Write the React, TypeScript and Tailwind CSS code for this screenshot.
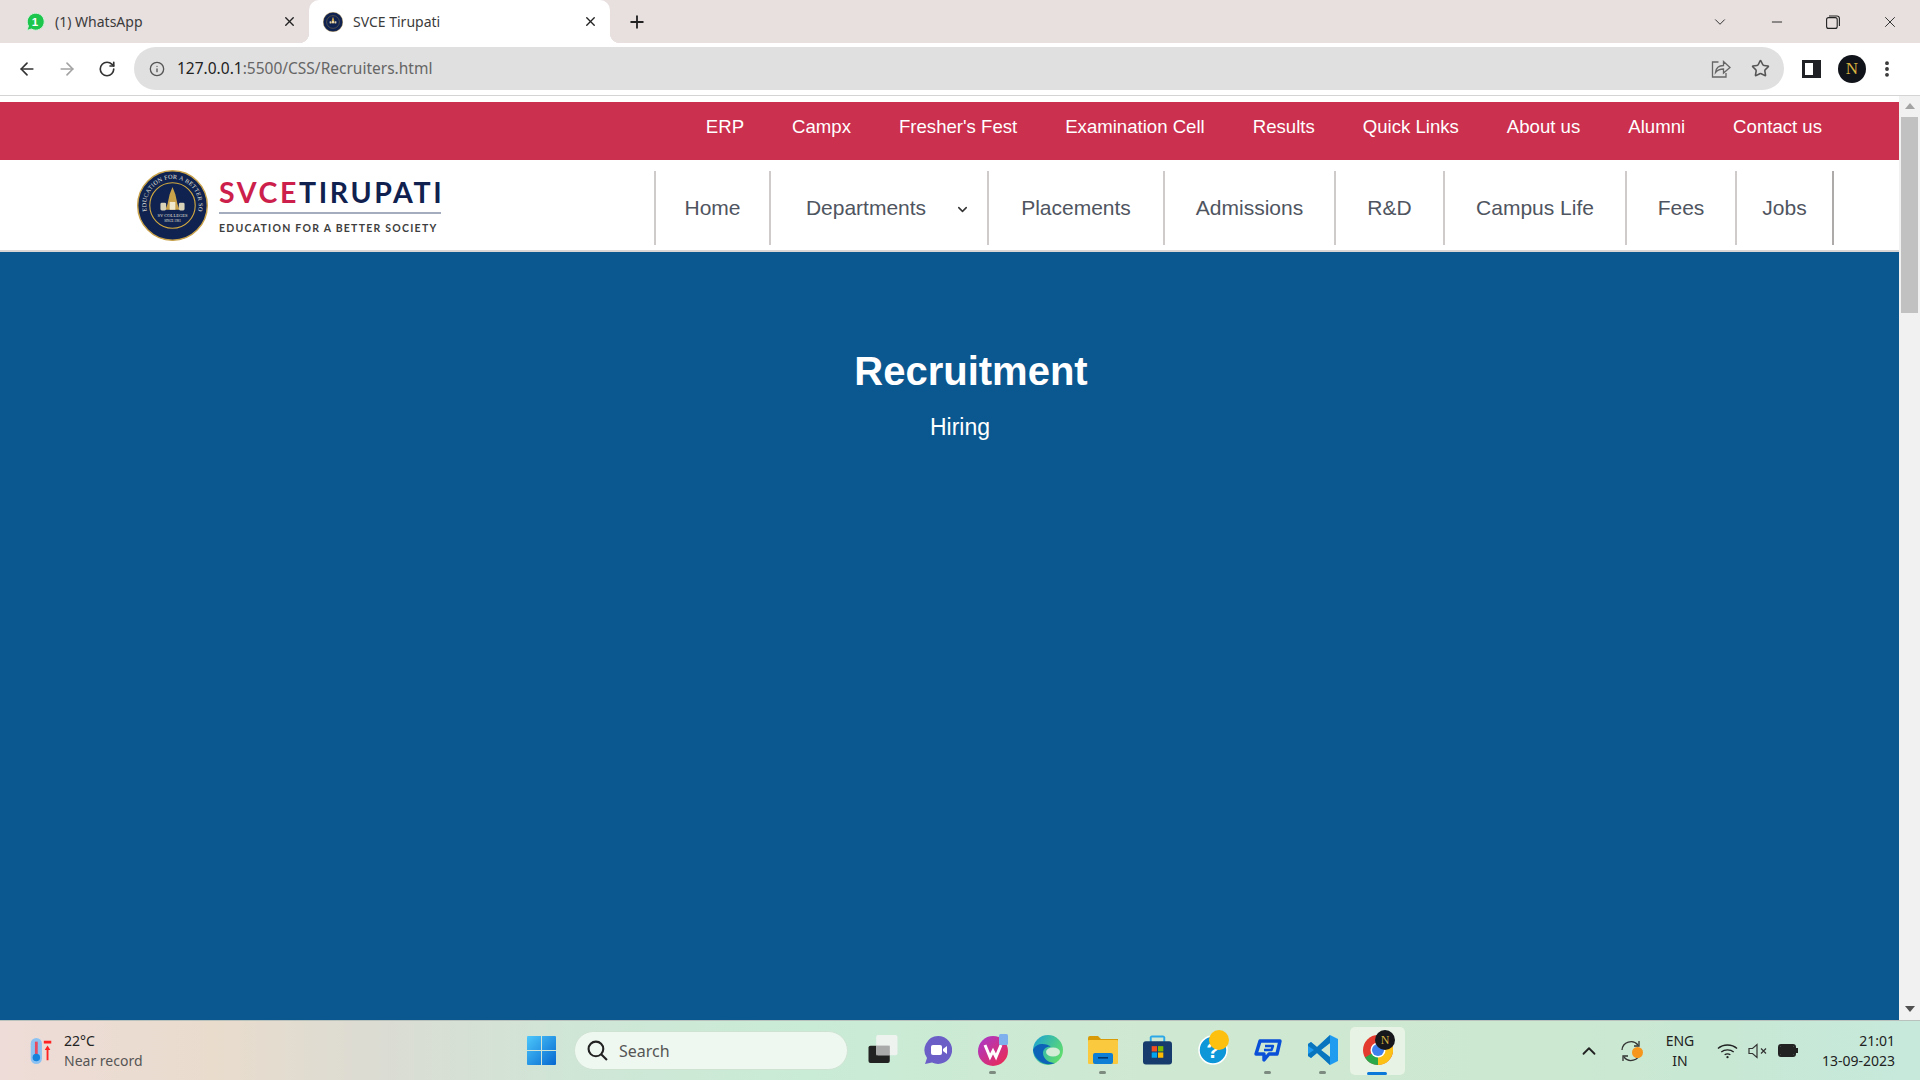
import { ArrowLeft, ArrowRight, ChevronDown, ChevronUp, Info, Minus, MoreVertical, Plus, RotateCw, Star, X } from "lucide-react";

const TOP_LINKS = ["ERP", "Campx", "Fresher's Fest", "Examination Cell", "Results", "Quick Links", "About us", "Alumni", "Contact us"];

const MAIN_LINKS = [
  { label: "Home", cls: "w-[115px]" },
  { label: "Departments", cls: "w-[218px]", caret: true },
  { label: "Placements", cls: "w-[176px]" },
  { label: "Admissions", cls: "w-[171px]" },
  { label: "R&D", cls: "w-[109px]" },
  { label: "Campus Life", cls: "w-[182px]" },
  { label: "Fees", cls: "w-[110px]" },
  { label: "Jobs", cls: "w-[97px]" },
];

function Seal({ small = false }: { small?: boolean }) {
  return (
    <svg viewBox="0 0 100 100" className={small ? "h-5 w-5 shrink-0" : "h-[71px] w-[71px] shrink-0"}>
      <defs>
        <path id={small ? "sealArcS" : "sealArc"} d="M 14 58 A 37 37 0 1 1 86 58" />
      </defs>
      <circle cx="50" cy="50" r="49" fill="#0f2250" stroke="#c9a24a" strokeWidth="2" />
      <circle cx="50" cy="50" r="32" fill="#0f2250" stroke="#d2a93f" strokeWidth="1.6" />
      {!small && (
        <text fontSize="8.6" fill="#e8e6dd" fontFamily="Liberation Serif, serif" letterSpacing="0.4">
          <textPath href="#sealArc">EDUCATION FOR A BETTER SOCIETY</textPath>
        </text>
      )}
      <path d="M50 24 L54 34 L57 48 L60 56 L40 56 L43 48 L46 34 Z" fill="#c9a24a" />
      <rect x="33" y="46" width="8" height="11" rx="2" fill="#d8d2b8" />
      <rect x="59" y="46" width="8" height="11" rx="2" fill="#d8d2b8" />
      <rect x="46" y="45" width="8" height="11" fill="#f0e8cc" />
      {!small && (
        <>
          <text x="50" y="66" textAnchor="middle" fontSize="6.4" fill="#e8e6dd" fontFamily="Liberation Serif, serif">SV COLLEGES</text>
          <text x="50" y="73" textAnchor="middle" fontSize="4.6" fill="#e8e6dd" fontFamily="Liberation Serif, serif">SINCE 1981</text>
        </>
      )}
    </svg>
  );
}

function WhatsAppIcon() {
  return (
    <svg viewBox="0 0 20 20" className="h-5 w-5 shrink-0">
      <path d="M2 18.5 L3.4 14 A8.5 8.5 0 1 1 6.4 17 Z" fill="#1cc54c" stroke="#d7efdc" strokeWidth="1" />
      <text x="10" y="14.2" textAnchor="middle" fontSize="11.5" fontWeight="700" fill="#fff" fontFamily="Liberation Sans, sans-serif">1</text>
    </svg>
  );
}

function Tabs() {
  return (
    <div className="flex h-[43px] shrink-0 items-center bg-[#e8dfdf] font-['Noto_Sans',sans-serif] text-[14px] text-[#3b3b3b]">
      <div className="flex h-full w-[309px] items-center pl-[25px] pr-[12px]">
        <WhatsAppIcon />
        <span className="ml-[10px]">(1) WhatsApp</span>
        <X className="ml-auto h-[15px] w-[15px] text-[#222]" strokeWidth={2.2} />
      </div>
      <div className="relative flex h-full w-[301px] items-center rounded-t-[10px] bg-white pl-[14px] pr-[12px] before:absolute before:bottom-0 before:left-[-10px] before:h-[10px] before:w-[10px] before:bg-[radial-gradient(circle_at_0_0,#e8dfdf_10px,#fff_10.5px)] after:absolute after:bottom-0 after:right-[-10px] after:h-[10px] after:w-[10px] after:bg-[radial-gradient(circle_at_100%_0,#e8dfdf_10px,#fff_10.5px)]">
        <Seal small />
        <span className="ml-[10px]">SVCE Tirupati</span>
        <X className="ml-auto h-[15px] w-[15px] text-[#222]" strokeWidth={2.2} />
      </div>
      <Plus className="ml-[17px] h-[20px] w-[20px] text-[#222]" strokeWidth={2.2} />
      <div className="ml-auto flex items-center pr-[21px] text-[#222]">
        <ChevronDown className="h-[18px] w-[18px]" strokeWidth={1.2} />
        <Minus className="ml-[40px] h-[16px] w-[16px]" strokeWidth={1.4} />
        <svg viewBox="0 0 14 14" className="ml-[41px] h-[14px] w-[14px]" fill="none" stroke="currentColor" strokeWidth="1.1">
          <rect x="0.6" y="2.6" width="10.6" height="10.8" rx="2" />
          <path d="M3 1 H11 A2.4 2.4 0 0 1 13.4 3.4 V11" />
        </svg>
        <X className="ml-[41px] h-[18px] w-[18px]" strokeWidth={1.2} />
      </div>
    </div>
  );
}

function Toolbar() {
  return (
    <div className="flex h-[53px] shrink-0 items-center border-b border-[#d4d4d4] bg-white pb-[1px]">
      <ArrowLeft className="ml-[17px] h-[20px] w-[20px] text-[#333]" strokeWidth={2} />
      <ArrowRight className="ml-[20px] h-[20px] w-[20px] text-[#a3a3a3]" strokeWidth={2} />
      <RotateCw className="ml-[21px] h-[18px] w-[18px] text-[#333]" strokeWidth={2.2} />
      <div className="ml-[18px] flex h-[43px] w-[1650px] items-center rounded-full bg-[#e0e0e0] pl-[15px] pr-[14px] font-['Noto_Sans',sans-serif] text-[15.5px]">
        <Info className="h-[16px] w-[16px] text-[#555]" strokeWidth={2} />
        <span className="ml-[12px] text-[#222]">127.0.0.1</span>
        <span className="text-[#666]">:5500/CSS/Recruiters.html</span>
        <svg viewBox="0 0 20 20" className="ml-auto h-[20px] w-[20px] text-[#666]" fill="none" stroke="currentColor" strokeWidth="1.3">
          <path d="M7.5 3 H1.5 V18 H15 V14" />
          <path d="M4.5 13.5 C5 9 8 6.5 12.5 6.5 V2.5 L19 8.5 L12.5 14 V10 C9 10 6.5 11 4.5 13.5 Z" />
        </svg>
        <Star className="ml-[20px] h-[19px] w-[19px] text-[#555]" strokeWidth={2} />
      </div>
      <div className="ml-[18px] flex h-[18px] w-[19px] justify-start border-[3px] border-[#202124] bg-[#202124]">
        <span className="h-full w-[8px] bg-white" />
      </div>
      <div className="ml-[17px] flex h-[28px] w-[28px] items-center justify-center rounded-full bg-[#10131a]">
        <span className="font-['Liberation_Serif',serif] text-[17px] leading-none text-[#d9b340]">N</span>
      </div>
      <MoreVertical className="ml-[11px] h-[20px] w-[20px] text-[#333]" strokeWidth={2.6} />
    </div>
  );
}

function Logo() {
  return (
    <div className="flex items-center pl-[137px]">
      <Seal />
      <div className="ml-[11px] flex w-[222px] flex-col font-['Lato',sans-serif]">
        <div className="flex text-[28.5px] font-bold leading-[32px] tracking-[2.6px]">
          <span className="text-[#cc1f4b]">SVCE</span>
          <span className="ml-auto text-[#10214f]">TIRUPATI</span>
        </div>
        <div className="mt-[4px] h-[2px] bg-[#a3adbd]" />
        <div className="mt-[8px] whitespace-nowrap text-[10.5px] font-bold leading-[13px] tracking-[1.25px] text-[#3e3e3e]">
          EDUCATION FOR A BETTER SOCIETY
        </div>
      </div>
    </div>
  );
}

function Page() {
  return (
    <div className="flex min-w-0 flex-1 flex-col bg-white pt-[6px] font-['Liberation_Sans',Arial,sans-serif]">
      <div className="flex h-[58px] shrink-0 justify-end gap-[48px] bg-[#cb304e] pr-[77px] pt-[12px] text-[18.6px] leading-[26px] text-white">
        {TOP_LINKS.map((t) => (
          <span key={t}>{t}</span>
        ))}
      </div>
      <div className="flex h-[92px] shrink-0 justify-between border-b-2 border-[#dbd6d6] pr-[65px]">
        <Logo />
        <div className="mt-[11px] flex h-[74px] border-r-2 border-[#aeaaaa]">
          {MAIN_LINKS.map((l) => (
            <div key={l.label} className={`relative flex items-center justify-center border-l-2 border-[#cfcbcb] text-[21px] text-[#4f5560] ${l.cls}`}>
              {l.caret ? (
                <>
                  <span className="mr-[26px]">{l.label}</span>
                  <ChevronDown className="absolute right-[17px] top-[31px] h-[15px] w-[15px] text-[#333]" strokeWidth={2.4} />
                </>
              ) : (
                l.label
              )}
            </div>
          ))}
        </div>
      </div>
      <div className="min-h-0 flex-1 bg-[#0b5790] pt-[94px] text-center text-white">
        <h1 className="pl-[43px] text-[40px] font-bold leading-[50px]">Recruitment</h1>
        <p className="mt-[17px] pl-[21px] text-[23px] leading-[28px]">Hiring</p>
      </div>
    </div>
  );
}

function Scrollbar() {
  return (
    <div className="flex w-[21px] shrink-0 flex-col items-center bg-[#f1f1f1]">
      <div className="mt-[7px] h-0 w-0 border-x-[5px] border-b-[6px] border-x-transparent border-b-[#a3a3a3]" />
      <div className="mt-[8px] h-[196px] w-[17px] bg-[#c1c1c1]" />
      <div className="mb-[8px] mt-auto h-0 w-0 border-x-[5px] border-t-[6px] border-x-transparent border-t-[#505050]" />
    </div>
  );
}

function Dock({ children, dot, active }: { children: React.ReactNode; dot?: boolean; active?: boolean }) {
  return (
    <div className={`relative flex h-[48px] w-[55px] shrink-0 items-center justify-center rounded-[5px] pb-[2px] ${active ? "bg-[#e7f3e4]" : ""}`}>
      {children}
      {dot && <span className="absolute bottom-[1px] left-[24px] h-[3px] w-[7px] rounded-full bg-[#7c8a80]" />}
      {active && <span className="absolute bottom-[0px] left-[17px] h-[3px] w-[20px] rounded-full bg-[#0a78d8]" />}
    </div>
  );
}

function DockIcons() {
  return (
    <>
      <Dock>
        <svg viewBox="0 0 30 30" className="h-[29px] w-[30px]">
          <rect x="0" y="11" width="22" height="18" rx="2" fill="#222" />
          <rect x="8" y="0" width="22" height="21" rx="2" fill="#f4f4f4" opacity="0.85" />
          <rect x="8" y="11" width="14" height="10" fill="#aaa" />
        </svg>
      </Dock>
      <Dock>
        <svg viewBox="0 0 28 28" className="h-[28px] w-[28px]">
          <path d="M14 0 A14 14 0 1 1 8 26.6 L1 28 L3 22 A14 14 0 0 1 14 0 Z" fill="#6b5fc7" />
          <rect x="7" y="9" width="11" height="10" rx="2" fill="#fff" />
          <path d="M19 13 L23 10 V18 L19 15 Z" fill="#fff" />
        </svg>
      </Dock>
      <Dock dot>
        <svg viewBox="0 0 30 32" className="h-[32px] w-[30px]">
          <defs>
            <linearGradient id="wps" x1="0" y1="0" x2="1" y2="1">
              <stop offset="0" stopColor="#a63ad0" />
              <stop offset="1" stopColor="#f0284a" />
            </linearGradient>
          </defs>
          <circle cx="15" cy="17" r="15" fill="url(#wps)" />
          <path d="M7 11 L12 23 L15 17 L18 23 L23 11" fill="none" stroke="#fff" strokeWidth="3" />
          <rect x="21" y="0" width="9" height="11" rx="1.5" fill="#7fb0ee" />
        </svg>
      </Dock>
      <Dock>
        <svg viewBox="0 0 30 30" className="h-[30px] w-[30px]">
          <defs>
            <linearGradient id="edgeA" x1="0" y1="0" x2="1" y2="0.6">
              <stop offset="0" stopColor="#1aa0d8" />
              <stop offset="1" stopColor="#5fdc6e" />
            </linearGradient>
          </defs>
          <circle cx="15" cy="15" r="15" fill="url(#edgeA)" />
          <path d="M0 15 C2 26 12 32 22 28 C16 28 10 24 10 18 C10 14 14 11 18 12 C14 8 3 7 0 15 Z" fill="#0c63b8" />
          <ellipse cx="20" cy="17" rx="7" ry="4.5" fill="#d2ecd6" />
        </svg>
      </Dock>
      <Dock dot>
        <svg viewBox="0 0 30 28" className="h-[28px] w-[30px]">
          <path d="M0 2 A2 2 0 0 1 2 0 H10 L13 3 H30 V8 H0 Z" fill="#d99a08" />
          <rect x="0" y="4" width="30" height="24" rx="1" fill="#fbc93e" />
          <rect x="5" y="17" width="20" height="11" rx="2" fill="#0f7fd6" />
          <rect x="10" y="21" width="10" height="1.6" fill="#06386b" />
        </svg>
      </Dock>
      <Dock>
        <svg viewBox="0 0 30 30" className="h-[30px] w-[29px]">
          <path d="M8 8 V3 A1.5 1.5 0 0 1 9.5 1 H20.500 A1.5 1.5 0 0 1 22 3 V8" fill="none" stroke="#2aa8e8" strokeWidth="2" />
          <rect x="0" y="6" width="30" height="24" rx="3" fill="#173b6c" />
          <rect x="9" y="11" width="5.500" height="5.500" fill="#f25022" />
          <rect x="15.500" y="11" width="5.500" height="5.500" fill="#7fba00" />
          <rect x="9" y="17.500" width="5.500" height="5.500" fill="#00a4ef" />
          <rect x="15.500" y="17.500" width="5.500" height="5.500" fill="#ffb900" />
        </svg>
      </Dock>
      <Dock>
        <svg viewBox="0 0 30 30" className="h-[30px] w-[30px]">
          <circle cx="15" cy="15" r="14" fill="#0d96d8" stroke="#fff" strokeWidth="1.5" />
          <text x="15" y="23" textAnchor="middle" fontSize="22" fontWeight="700" fill="#fff" fontFamily="Liberation Sans, sans-serif">?</text>
        </svg>
        <span className="absolute left-[24px] top-[3px] h-[20px] w-[20px] rounded-full bg-[#fdc00f]" />
      </Dock>
      <Dock dot>
        <svg viewBox="0 0 30 26" className="h-[26px] w-[30px]" fill="none" stroke="#0a4fd8" strokeWidth="3.4" strokeLinejoin="round">
          <path d="M7 4 H27 L24 17 H16 L11 23 V17 H3 Z" />
          <path d="M12 9 H20 L18.500 13 H11" strokeWidth="2.4" />
        </svg>
      </Dock>
      <Dock dot>
        <svg viewBox="0 0 30 30" className="h-[30px] w-[30px]">
          <path d="M22 0 L30 4 V26 L22 30 L9 18 L3 23 L0 21 V9 L3 7 L9 12 Z M22 8 L13 15 L22 22 Z" fill="#1f9cf0" fillRule="evenodd" />
          <path d="M22 0 L9 12 L3 7 L0 9 V11 L6 15 L0 19 V21 L3 23 L9 18 L22 30 Z M22 8 L13 15 L22 22 Z" fill="#0065a9" fillRule="evenodd" opacity="0.7" />
        </svg>
      </Dock>
      <Dock active>
        <svg viewBox="0 0 30 30" className="h-[30px] w-[30px]">
          <circle cx="15" cy="15" r="15" fill="#e33b2e" />
          <path d="M15 15 L2 22.500 A15 15 0 0 0 15 30 L28 7.500 Z" fill="#2aa84a" />
          <path d="M15 15 L15 30 A15 15 0 0 0 28 7.500 Z" fill="#fbc116" />
          <circle cx="15" cy="15" r="7.500" fill="#fff" />
          <circle cx="15" cy="15" r="6" fill="#3d80ee" />
        </svg>
        <span className="absolute left-[25px] top-[3px] flex h-[20px] w-[20px] items-center justify-center rounded-full bg-[#16181c] font-['Liberation_Serif',serif] text-[12px] text-[#d9b340]">
          N
        </span>
      </Dock>
    </>
  );
}

function Taskbar() {
  return (
    <div className="flex h-[60px] shrink-0 items-center border-t border-[#b9c2bd] bg-[linear-gradient(90deg,#eedcd8_0%,#e9dccd_11%,#dbdcd3_20%,#cfe6d6_30%,#c9ecd6_42%,#cfe8d2_60%,#cde8d0_78%,#c8e8d4_90%,#c6e9dc_100%)] font-['Noto_Sans',sans-serif] text-[#222]">
      <div className="flex w-[527px] shrink-0 items-center pl-[29px]">
        <svg viewBox="0 0 24 30" className="h-[28px] w-[24px]">
          <rect x="1" y="1" width="12" height="28" rx="6" fill="#8cc2f2" />
          <rect x="5.500" y="5" width="3" height="16" fill="#e84a5f" />
          <circle cx="7" cy="22" r="4" fill="#1583dc" />
          <rect x="15" y="4" width="8" height="3" fill="#f22" />
          <path d="M19 9 L22 14 H20 V25 H18 V14 H16 Z" fill="#f22" />
        </svg>
        <div className="ml-[11px] flex flex-col text-[14px] leading-[20px]">
          <span className="text-[#222]">22°C</span>
          <span className="text-[#555]">Near record</span>
        </div>
      </div>
      <svg viewBox="0 0 29 29" className="h-[29px] w-[29px] shrink-0">
        <defs>
          <linearGradient id="win" x1="0" y1="0" x2="1" y2="1">
            <stop offset="0" stopColor="#4cc7fb" />
            <stop offset="1" stopColor="#0668d0" />
          </linearGradient>
        </defs>
        <path d="M0 1 A1 1 0 0 1 1 0 H14 V14 H0 Z M15 0 H28 A1 1 0 0 1 29 1 V14 H15 Z M0 15 H14 V29 H1 A1 1 0 0 1 0 28 Z M15 15 H29 V28 A1 1 0 0 1 28 29 H15 Z" fill="url(#win)" />
      </svg>
      <div className="ml-[18px] flex h-[39px] w-[274px] shrink-0 items-center rounded-full border border-[#cfe3d3] bg-[#eef8f0] pl-[12px] text-[16px] text-[#555]">
        <svg viewBox="0 0 20 20" className="h-[21px] w-[21px]" fill="none" stroke="#222" strokeWidth="2">
          <circle cx="8.500" cy="8.500" r="7" />
          <path d="M13.500 13.500 L19 19" />
        </svg>
        <span className="ml-[11px]">Search</span>
      </div>
      <div className="ml-[7px] flex items-center">
        <DockIcons />
      </div>
      <div className="ml-auto flex items-center pr-[25px]">
        <ChevronUp className="h-[22px] w-[22px] text-[#222]" strokeWidth={2} />
        <div className="relative ml-[20px] h-[22px] w-[22px]">
          <svg viewBox="0 0 22 22" className="h-[22px] w-[22px]" fill="none" stroke="#333" strokeWidth="1.3">
            <path d="M2 10 A9 9 0 0 1 18 5" />
            <path d="M19 1 V6 H14" />
            <path d="M20 13 A9 9 0 0 1 4 17" />
            <path d="M3 21 V16 H8" />
          </svg>
          <span className="absolute right-[-1px] top-[7px] h-[11px] w-[11px] rounded-full bg-[#f6961c]" />
        </div>
        <div className="ml-[24px] flex w-[28px] flex-col items-center text-[14px] leading-[20px]">
          <span>ENG</span>
          <span>IN</span>
        </div>
        <svg viewBox="0 0 22 16" className="ml-[23px] h-[16px] w-[21px]" fill="none" stroke="#222" strokeWidth="1.4">
          <path d="M1 5.500 C6.500 0.500 15.500 0.500 21 5.500" />
          <path d="M4.500 9 C8 6 14 6 17.500 9" />
          <path d="M8 12 C9.800 10.800 12.200 10.800 14 12" />
          <circle cx="11" cy="14.500" r="1.200" fill="#222" stroke="none" />
        </svg>
        <svg viewBox="0 0 20 16" className="ml-[10px] h-[16px] w-[20px]" fill="none" stroke="#333" strokeWidth="1.2">
          <path d="M1 5.500 H4.500 L9 1.500 V14.500 L4.500 10.500 H1 Z" />
          <path d="M13 5.500 L18 10.500 M18 5.500 L13 10.500" />
        </svg>
        <div className="ml-[10px] flex items-center">
          <div className="h-[13px] w-[18px] rounded-[3px] border-2 border-[#222] bg-[#222] bg-clip-padding" />
          <span className="h-[5px] w-[2px] bg-[#222]" />
        </div>
        <div className="ml-[13px] flex w-[84px] flex-col items-end text-[14px] leading-[20px]">
          <span>21:01</span>
          <span>13-09-2023</span>
        </div>
      </div>
    </div>
  );
}

export default function App() {
  return (
    <div className="flex h-screen w-[1920px] flex-col overflow-hidden">
      <Tabs />
      <Toolbar />
      <div className="flex min-h-0 flex-1">
        <Page />
        <Scrollbar />
      </div>
      <Taskbar />
    </div>
  );
}
